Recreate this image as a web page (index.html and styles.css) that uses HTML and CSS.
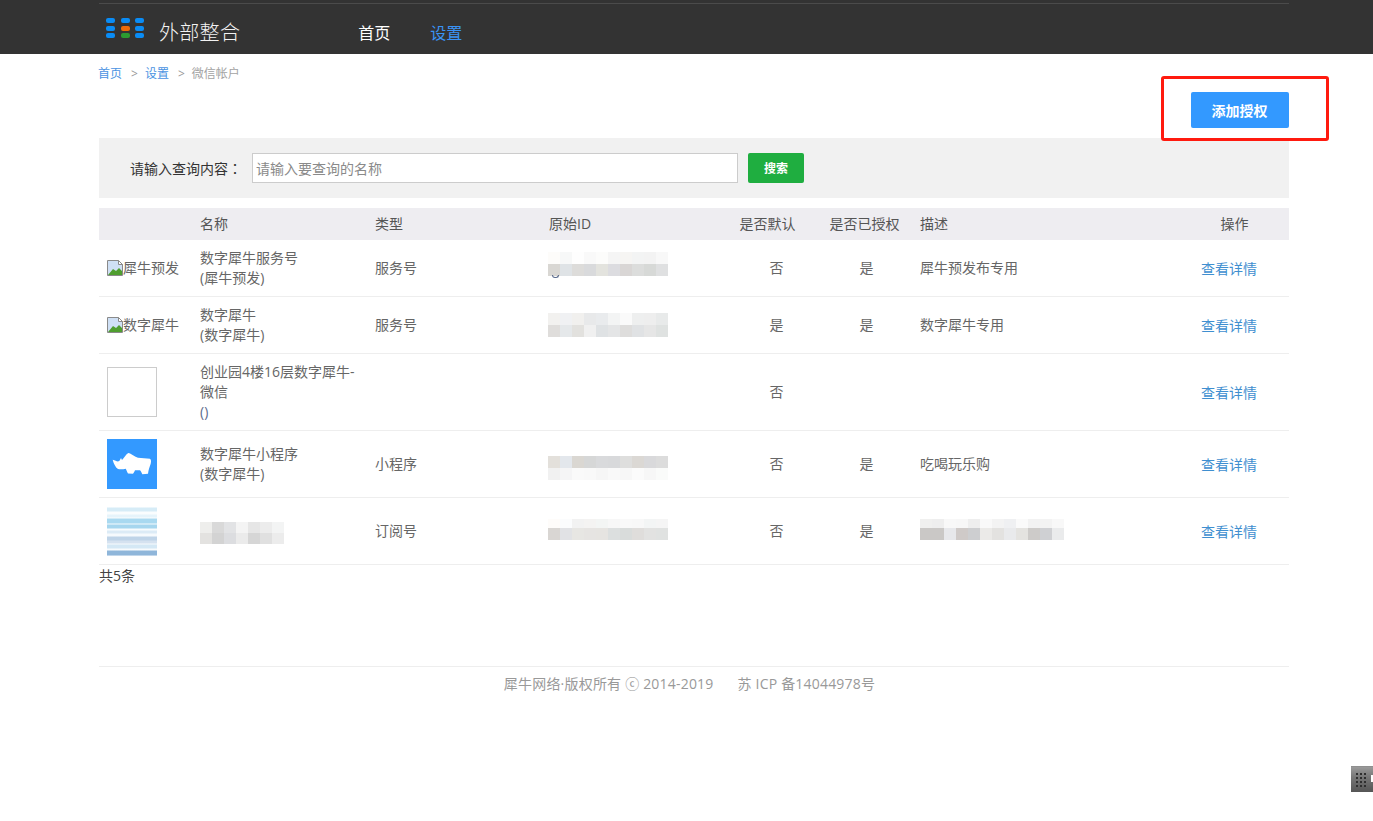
FILE: index.html
```html
<!DOCTYPE html>
<html lang="zh-CN">
<head>
<meta charset="utf-8">
<title>外部整合</title>
<link rel="stylesheet" href="styles.css">
</head>
<body>
<header class="topbar">
  <div class="topbar-inner">
    <a class="brand" href="#">
      <svg class="brand-mark" width="38" height="22" viewBox="0 0 38 22" aria-hidden="true">
        <rect x="0" y="0" width="9" height="5" rx="2" fill="#0a8cf5"/><rect x="15" y="0" width="9" height="5" rx="2" fill="#0a8cf5"/><rect x="29" y="0" width="9" height="5" rx="2" fill="#0a8cf5"/>
        <rect x="0" y="8" width="9" height="5" rx="2" fill="#0a8cf5"/><rect x="15" y="8" width="9" height="5" rx="2" fill="#ee6a08"/><rect x="29" y="8" width="9" height="5" rx="2" fill="#0a8cf5"/>
        <rect x="0" y="15" width="9" height="5" rx="2" fill="#0a8cf5"/><rect x="15" y="15" width="9" height="5" rx="2" fill="#2c9a30"/><rect x="29" y="15" width="9" height="5" rx="2" fill="#0a8cf5"/>
      </svg>
      <span class="brand-name">外部整合</span>
    </a>
    <nav class="nav">
      <a href="#">首页</a>
      <a class="active" href="#">设置</a>
    </nav>
  </div>
</header>

<main class="page">
  <div class="crumbs">
    <a href="#">首页</a><span class="sep">&gt;</span><a href="#">设置</a><span class="sep">&gt;</span><span class="here">微信帐户</span>
  </div>
  <div class="toolbar">
    <button class="btn-add" type="button">添加授权</button>
  </div>
  <form class="search">
    <label class="search-label" for="q">请输入查询内容<span class="colon" lang="zh-Hant">：</span></label>
    <input class="search-input" id="q" type="text" placeholder="请输入要查询的名称">
    <button class="btn-search" type="button">搜索</button>
  </form>

  <table class="grid">
    <colgroup>
      <col class="c1"><col class="c2"><col class="c3"><col class="c4"><col class="c5"><col class="c6"><col class="c7"><col class="c8">
    </colgroup>
    <thead>
      <tr>
        <th></th><th>名称</th><th>类型</th><th>原始ID</th><th class="mid">是否默认</th><th class="mid">是否已授权</th><th>描述</th><th class="mid">操作</th>
      </tr>
    </thead>
    <tbody>
      <tr>
        <td class="pic"><span class="broken"><svg width="16" height="16" viewBox="0 0 16 16" aria-hidden="true"><path d="M.5.5h11l4 4v11H.5z" fill="#cfe0f5" stroke="#8a8a8a"/><path d="M1 15l5-6 3 2 3-3 3 3v4z" fill="#4f9e2f"/><path d="M11.500.5v4h4z" fill="#fff" stroke="#8a8a8a"/></svg>犀牛预发</span></td>
        <td class="name">数字犀牛服务号<br>(犀牛预发)</td>
        <td>服务号</td>
        <td><div class="mosaic m1 up"></div></td>
        <td class="flag-a">否</td><td class="flag-b">是</td>
        <td>犀牛预发布专用</td>
        <td class="act"><a href="#">查看详情</a></td>
      </tr>
      <tr>
        <td class="pic"><span class="broken"><svg width="16" height="16" viewBox="0 0 16 16" aria-hidden="true"><path d="M.5.5h11l4 4v11H.5z" fill="#cfe0f5" stroke="#8a8a8a"/><path d="M1 15l5-6 3 2 3-3 3 3v4z" fill="#4f9e2f"/><path d="M11.500.5v4h4z" fill="#fff" stroke="#8a8a8a"/></svg>数字犀牛</span></td>
        <td class="name">数字犀牛<br>(数字犀牛)</td>
        <td>服务号</td>
        <td><div class="mosaic m2"></div></td>
        <td class="flag-a">是</td><td class="flag-b">是</td>
        <td>数字犀牛专用</td>
        <td class="act"><a href="#">查看详情</a></td>
      </tr>
      <tr>
        <td class="pic"><div class="thumb thumb-empty"></div></td>
        <td class="name">创业园4楼16层数字犀牛-微信<br><span class="paren">()</span></td>
        <td></td>
        <td></td>
        <td class="flag-a">否</td><td class="flag-b"></td>
        <td></td>
        <td class="act"><a href="#">查看详情</a></td>
      </tr>
      <tr>
        <td class="pic"><div class="thumb thumb-blue"><svg width="50" height="50" viewBox="0 0 50 50" aria-hidden="true"><path d="M5.700 20.700C8 21.500 9.500 22 11 22.500L12.500 21.800 14 19l1 2c2-2 4-6 6.300-7 2.700.5 6.700 4 9.700 4.700l12 1c1.500 1.300 1 3.300.7 5-1.200 3.300-2.200 6.300-2.700 10l-5.700.6c-.8-1.800-1.300-3-2.300-4h-5c-.5 1.200-1 2.200-2 3.400l-5-.2c-1-1.500-1.500-3.500-2.300-4.800-2.700.8-5.700.8-7.700.3-2.500-1.500-4.500-6-5.300-9.300z" fill="#fff"/></svg></div></td>
        <td class="name">数字犀牛小程序<br>(数字犀牛)</td>
        <td>小程序</td>
        <td><div class="mosaic m3 down"></div></td>
        <td class="flag-a">否</td><td class="flag-b">是</td>
        <td>吃喝玩乐购</td>
        <td class="act"><a href="#">查看详情</a></td>
      </tr>
      <tr>
        <td class="pic"><div class="thumb thumb-stripes"></div></td>
        <td class="name"><div class="mosaic m5 low"></div></td>
        <td>订阅号</td>
        <td><div class="mosaic m4 slim"></div></td>
        <td class="flag-a">否</td><td class="flag-b">是</td>
        <td><div class="mosaic m6 slim"></div></td>
        <td class="act"><a href="#">查看详情</a></td>
      </tr>
    </tbody>
  </table>
  <div class="total">共5条</div>

  <footer class="foot">
    <span>犀牛网络·版权所有 ⓒ 2014-2019</span><span class="icp">苏 ICP 备14044978号</span>
  </footer>
</main>

<div class="side-tab" aria-hidden="true"></div>
<div class="callout" aria-hidden="true"></div>
</body>
</html>
```

FILE: styles.css
```css
* { box-sizing: border-box; }
html, body { height: 100%; }
body {
  margin: 0;
  background: #fff;
  color: #666;
  font: 14px/20px "Open Sans", "Noto Sans CJK SC", sans-serif;
  overflow: hidden;
}
a { text-decoration: none; }

.topbar { height: 54px; background: #333; padding: 3px 84px 0 99px; }
.topbar-inner {
  height: 51px;
  border-top: 1px solid #4b4b4b;
  display: flex;
  align-items: flex-start;
}
.brand { display: flex; align-items: flex-start; margin-left: 7px; color: #fff; }
.brand-mark { margin-top: 14px; }
.brand-name { margin: 15px 0 0 15px; font-size: 20px; line-height: 28px; font-weight: 300; letter-spacing: .3px; color: #f2f2f2; }
.nav { display: flex; gap: 40px; margin: 16px 0 0 118px; }
.nav a { font-size: 16px; line-height: 26px; color: #fff; }
.nav a.active { color: #3a93f5; }

.page { width: 1190px; margin-left: 99px; }
.crumbs { height: 38px; padding-top: 11px; margin-left: -1px; font-size: 12px; line-height: 18px; color: #999; }
.crumbs a { color: #4a93e2; }
.crumbs .sep { margin: 0 7px 0 9px; color: #999; }
.crumbs .here { color: #a3a3a3; }

.toolbar { display: flex; justify-content: flex-end; margin-bottom: 10px; }
.btn-add {
  width: 98px; height: 36px;
  border: 0; border-radius: 2px;
  background: #3399ff; color: #fff;
  font: bold 14px/36px "Noto Sans CJK SC", sans-serif;
  padding: 0 1px 2px 0;
}

.search {
  height: 60px;
  background: #f1f1f1;
  display: flex;
  align-items: center;
  padding-left: 31px;
}
.search-label { width: 122px; color: #333; }
.colon { font-family: "Noto Sans CJK TC", sans-serif; }
.search-input {
  width: 486px; height: 30px;
  border: 1px solid #ccc;
  background: #fff;
  padding: 0 3px 1px;
  font: 14px "Noto Sans CJK SC", sans-serif;
  outline: 0;
}
.search-input::placeholder { color: #8a8a8a; opacity: 1; }
.btn-search {
  width: 56px; height: 30px;
  margin-left: 10px;
  border: 0; border-radius: 2px;
  background: #1fae40; color: #fff;
  font: bold 12px/30px "Noto Sans CJK SC", sans-serif;
  padding: 0;
}

.grid { width: 1190px; margin-top: 10px; border-collapse: collapse; table-layout: fixed; }
.c1 { width: 101px; } .c2 { width: 175px; } .c3 { width: 174px; } .c4 { width: 165px; }
.c5 { width: 107px; } .c6 { width: 87px; } .c7 { width: 272px; } .c8 { width: 109px; }
.grid th {
  height: 32px; padding: 0;
  background: #eeedf1;
  color: #555;
  font-weight: 400;
  text-align: left;
}
.grid th:nth-child(7) { padding-left: 12px; }
.grid th.mid { text-align: center; }
.grid td { padding: 8px 0; border-bottom: 1px solid #eee; vertical-align: middle; }
.grid td:nth-child(7) { padding-left: 12px; }
.grid td.pic { padding: 8px 0 8px 8px; }
.grid td.name { padding-right: 15px; }
.flag-a { text-align: center; padding-left: 18px !important; }
.flag-b { text-align: center; padding-left: 4px !important; }
.act { text-align: center; padding-right: 11px !important; padding-top: 10px !important; }
.act a { color: #3f8fd0; }
.paren { color: #5b6b8c; }

.broken { display: flex; align-items: center; white-space: nowrap; }
.broken svg { flex: none; }
.thumb { width: 50px; height: 50px; }
.thumb-empty { border: 1px solid #ccc; }
.thumb-blue { background: #3399ff; }
.thumb-stripes {
  background:
    linear-gradient(#fff 0 1px, #d6ecf7 2px 5px, #fafdfe 6px 8px, #e6f4fb 9px 11px, #fbfdfe 12px, #a9d9f0 13px 17px, #f6fbfd 18px, #a6d6ee 19px 22px, #f8fcfe 23px 24px, #dcebf6 25px 27px, #f6fafd 28px 30px, #bfd4e8 31px 34px, #d5e2f0 35px 37px, #f8fbfd 38px, #d4e8f5 39px 42px, #f8fbfd 43px 44px, #8fb6da 45px 49px, #f2f6fb 50px);
}

.mosaic { width: 120px; height: 24px; background-repeat: no-repeat; background-size: 100% 50%; background-position: 0 0, 0 100%; }
.up { margin: 0 0 8px -1px; position: relative; }
.up::after {
  content: "";
  position: absolute; left: 4px; bottom: -2px;
  width: 5px; height: 2px;
  border: 1px solid #5b6b8c; border-top: 0;
  border-radius: 0 0 3px 3px;
}
.down { margin: 8px 0 0 -1px; }
.m2 { margin-left: -1px; }
.slim { height: 21px; margin-bottom: 4px; background-size: 100% 9px, 100% 12px; }
.m4 { margin-left: -1px; }
.low { margin-top: 3px; height: 22px; }
.m1 { background-image:
  linear-gradient(90deg,#fdfcfa 0 12px,#f7f8f8 12px 24px,#fefefe 24px 36px,#f9f9f9 36px 48px,#fcfcfb 48px 60px,#f5f5f5 60px 72px,#f6f5f3 72px 84px,#f3f4f4 84px 96px,#f3f3f3 96px 108px,#f8f8f8 108px),
  linear-gradient(90deg,#d9d7d3 0 12px,#dfe3e6 12px 24px,#dddcda 24px 36px,#d9dadc 36px 48px,#e3e3de 48px 60px,#dcdce0 60px 72px,#d9d6d5 72px 84px,#dcdddc 84px 96px,#d7d9d7 96px 108px,#dfe0e1 108px); }
.m2 { background-image:
  linear-gradient(90deg,#f2f1ef 0 12px,#f0f1f3 12px 24px,#f1f0ee 24px 36px,#e8e9ea 36px 48px,#e9ebed 48px 60px,#f3f4f4 60px 72px,#fafafa 72px 84px,#eeefef 84px 96px,#eeeeee 96px 108px,#e8eaea 108px),
  linear-gradient(90deg,#dfdddb 0 12px,#e5e8ea 12px 24px,#e2e1de 24px 36px,#f0f0f0 36px 48px,#dfe2e4 48px 60px,#e4e5e6 60px 72px,#dedddc 72px 84px,#e0e2e4 84px 96px,#e6e6e6 96px 108px,#dfe2e1 108px); }
.m3 { background-image:
  linear-gradient(90deg,#e3e0db 0 12px,#e3e7ec 12px 24px,#dad7d2 24px 36px,#d6d7d7 36px 48px,#d9dadc 48px 60px,#d8d9db 60px 72px,#dededd 72px 84px,#dbd8d4 84px 96px,#d9d9db 96px 108px,#dcdcdc 108px),
  linear-gradient(90deg,#f1f1f1 0 12px,#f5f5f6 12px 24px,#fafafa 24px 36px,#f9f9f9 36px 48px,#f6f6f6 48px 60px,#f9f9f9 60px 72px,#f7f7f7 72px 84px,#fbfbfb 84px 96px,#f7f7f7 96px 108px,#fafbfa 108px); }
.m4 { background-image:
  linear-gradient(90deg,#fefcfa 0 12px,#fbfcfd 12px 24px,#f2f2f2 24px 36px,#f4f3f2 36px 48px,#f3f5f4 48px 60px,#f7f7f7 60px 72px,#f9f9f9 72px 84px,#f8f8f8 84px 96px,#f3f5f5 96px 108px,#f5f5f5 108px),
  linear-gradient(90deg,#d9d6d3 0 12px,#e1e2e5 12px 24px,#e7e6e3 24px 36px,#e6e4e2 36px 48px,#e6e4e1 48px 60px,#dcdfdf 60px 72px,#d9dcdb 72px 84px,#dfdddb 84px 96px,#e2e2e1 96px 108px,#e0e2e1 108px); }
.m5 { width: 84px; background-image:
  linear-gradient(90deg,#eeeeec 0 12px,#d9d9d9 12px 24px,#e2e3e5 24px 36px,#f4f4f4 36px 48px,#e6e6e6 48px 60px,#ececec 60px 72px,#f3f4f4 72px),
  linear-gradient(90deg,#e3e2e0 0 12px,#d3d3d3 12px 24px,#dcdde0 24px 36px,#ebebeb 36px 48px,#d6d6d6 48px 60px,#e0e0e0 60px 72px,#ececec 72px); }
.m6 { width: 144px; background-image:
  linear-gradient(90deg,#f0f0ef 0 12px,#eeeeee 12px 24px,#f8f8f8 24px 36px,#f7f7f7 36px 48px,#eeeeee 48px 60px,#f9f9f9 60px 72px,#f3f3f3 72px 84px,#eff0f2 84px 96px,#fafafa 96px 108px,#f2f2f2 108px 120px,#f3f3f3 120px 132px,#f8f8f8 132px),
  linear-gradient(90deg,#cac8c6 0 24px,#e7e8eb 24px 36px,#cfcac8 36px 48px,#cdced0 48px 60px,#ebeae8 60px 72px,#e3e2e0 72px 84px,#e9eaec 84px 96px,#e4e3e0 96px 108px,#cdcbc9 108px 120px,#cfd0d3 120px 132px,#eaebec 132px); }

.total { color: #444; line-height: 20px; padding: 1px 0; }
.foot {
  margin-top: 79px;
  border-top: 1px solid #eee;
  padding: 7px 9px 0 0;
  text-align: center;
  color: #999;
  letter-spacing: .2px;
}
.icp { margin-left: 24px; }

.side-tab {
  position: fixed; right: 0; top: 766px;
  width: 22px; height: 26px;
  border-top: 1px solid #8f8f8f;
  background: linear-gradient(#9a9a9a, #777 40%, #555);
}
.side-tab::before {
  content: "";
  position: absolute; left: 4px; top: 5px;
  width: 12px; height: 17px;
  background: radial-gradient(circle, #2f2f2f 0 1px, transparent 1.400px) 0 0 / 4px 4px;
}
.side-tab::after {
  content: "";
  position: absolute; right: 0; top: 8px;
  width: 2px; height: 7px;
  background: #fff;
}
.callout {
  position: absolute; left: 1161px; top: 76px;
  width: 168px; height: 65px;
  border: 3px solid #ff1a0f;
  border-radius: 3px;
}
```
